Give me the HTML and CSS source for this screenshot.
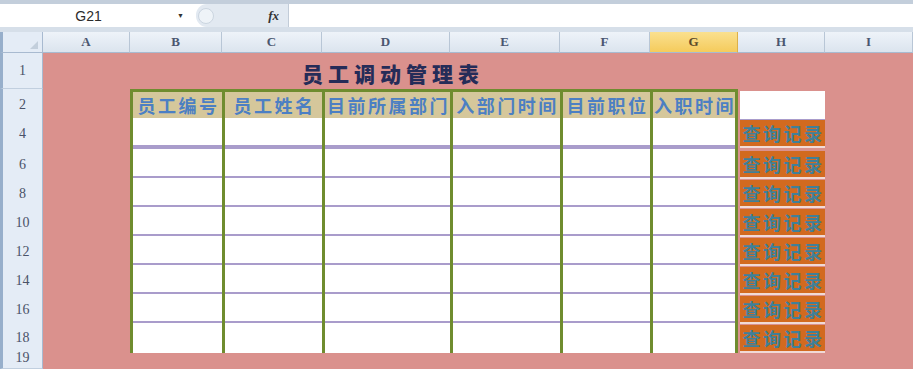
FILE: index.html
```html
<!DOCTYPE html>
<html lang="zh-CN">
<head>
    <meta charset="UTF-8">
    <title>员工调动管理表</title>
    <link rel="stylesheet" href="styles.css">
</head>
<body>
    <div class="top-strip"></div>
    <div class="formula-bar">
        <div class="name-box">
            <span class="cell-ref">G21</span>
            <span class="drop">&#9660;</span>
        </div>
        <div class="fx-pill">
            <span class="knob"></span>
            <span class="fx">fx</span>
        </div>
        <div class="formula-input"></div>
    </div>
    <div class="bar-gap"></div>

    <div class="sheet">
        <div class="row row-cols">
            <div class="corner"></div>
            <div class="col-head">A</div>
            <div class="col-head">B</div>
            <div class="col-head">C</div>
            <div class="col-head">D</div>
            <div class="col-head">E</div>
            <div class="col-head">F</div>
            <div class="col-head active">G</div>
            <div class="col-head">H</div>
            <div class="col-head">I</div>
        </div>

        <div class="row row-title">
            <div class="row-head">1</div>
            <div class="title">员工调动管理表</div>
        </div>

        <div class="row row-caption">
            <div class="row-head">2</div>
            <div></div>
            <div class="th">员工编号</div>
            <div class="th">员工姓名</div>
            <div class="th">目前所属部门</div>
            <div class="th">入部门时间</div>
            <div class="th">目前职位</div>
            <div class="th last">入职时间</div>
            <div class="blank-cell"></div>
        </div>

        <div id="records"></div>

        <div class="row row-end">
            <div class="row-head">19</div>
        </div>
    </div>

    <script>
        // rows 4..18, every second row is a thin separator so only even numbers show
        const rowNumbers = [4, 6, 8, 10, 12, 14, 16, 18];
        const records = document.getElementById('records');

        records.innerHTML = rowNumbers.map((num, i) => {
            let kind = 'row-data';
            if (i === 0) kind = 'row-first';
            if (i === rowNumbers.length - 1) kind = 'row-last';
            return `
            <div class="row ${kind}">
                <div class="row-head">${num}</div>
                <div></div>
                <div class="td"></div>
                <div class="td"></div>
                <div class="td"></div>
                <div class="td"></div>
                <div class="td"></div>
                <div class="td last"></div>
                <div class="query"><span>查询记录</span></div>
            </div>`;
        }).join('');
    </script>
</body>
</html>
```

FILE: styles.css
```css
* {
    box-sizing: border-box;
}
body {
    margin: 0;
    width: 913px;
    height: 369px;
    overflow: hidden;
    background-color: #da918d;
    font-family: "Liberation Sans", "Noto Sans CJK SC", sans-serif;
}
.top-strip {
    height: 4px;
    background-color: #c3cedb;
}
.formula-bar {
    display: flex;
    height: 23px;
    background-color: #fff;
}
.name-box {
    width: 196px;
    display: flex;
    align-items: center;
}
.cell-ref {
    width: 177px;
    text-align: center;
    font-size: 14px;
    color: #2b2b2b;
}
.drop {
    font-size: 7px;
    color: #333;
}
.fx-pill {
    width: 93px;
    display: flex;
    align-items: center;
    justify-content: space-between;
    padding: 0 9px 0 2px;
    background-color: #e2e9f1;
    border-radius: 11px 0 0 11px;
    border-right: 1px solid #c2ccd8;
}
.knob {
    width: 16px;
    height: 16px;
    border-radius: 50%;
    border: 1px solid #cbd5e0;
    background-color: #eef3f8;
}
.fx {
    font-family: "Liberation Serif", serif;
    font-style: italic;
    font-weight: bold;
    font-size: 13px;
    color: #333;
}
.formula-input {
    flex: 1;
}
.bar-gap {
    height: 5px;
    background-color: #d6dfe9;
}

/* sheet grid */
.row {
    display: grid;
    grid-template-columns: 43px 87px 92px 100px 128px 110px 90px 88px 87px 88px;
}
.row-cols {
    height: 21px;
}
.row-title {
    height: 36px;
}
.row-caption {
    height: 29px;
}
.row-first {
    height: 31px;
}
.row-data {
    height: 29px;
}
.row-last {
    height: 24px;
}
.row-end {
    height: 22px;
}

.corner {
    position: relative;
    background-color: #e4ecf6;
    border-left: 3px solid #97afcb;
    border-right: 1px solid #a8bad0;
    border-bottom: 1px solid #a8bad0;
}
.corner::after {
    content: "";
    position: absolute;
    right: 4px;
    bottom: 3px;
    border-left: 8px solid transparent;
    border-bottom: 8px solid #c3cfdc;
}
.col-head {
    display: flex;
    align-items: center;
    justify-content: center;
    background: linear-gradient(#eef3f9, #dbe4ee);
    border-right: 1px solid #b8c6d6;
    border-bottom: 1px solid #a8bad0;
    font-family: "Liberation Serif", serif;
    font-weight: bold;
    font-size: 13px;
    color: #4a5670;
}
.col-head.active {
    background: linear-gradient(#fae08f, #f5cb5c);
    border-right-color: #dcb04a;
    color: #5a4a2a;
}
.row-head {
    display: flex;
    align-items: center;
    justify-content: center;
    background-color: #e4ecf6;
    border-left: 3px solid #97afcb;
    border-right: 1px solid #a8bad0;
    border-bottom: 1px solid #c1cfdf;
    font-family: "Liberation Serif", serif;
    font-size: 14px;
    color: #4a5268;
}

.title {
    grid-column: 4 / 7;
    padding: 5px 0 0 4px;
    text-align: center;
    font-family: "Noto Sans CJK SC", sans-serif;
    font-weight: 900;
    font-size: 21px;
    letter-spacing: 5px;
    color: #252c58;
}

.th {
    display: flex;
    align-items: center;
    justify-content: center;
    padding-left: 2px;
    white-space: nowrap;
    background-color: #d5c79b;
    border-top: 3px solid #6f8c2f;
    border-bottom: 4px solid #6f8c2f;
    border-left: 3px solid #6f8c2f;
    font-family: "Noto Sans CJK SC", sans-serif;
    font-weight: bold;
    font-size: 18px;
    letter-spacing: 2.5px;
    color: #4c7fc3;
}
.th.last,
.td.last {
    border-right: 3px solid #6f8c2f;
}
.blank-cell {
    margin: 2px 0 0 2px;
    background-color: #fff;
    border-bottom: 3px solid #a99ccb;
}
.td {
    border-left: 3px solid #6f8c2f;
    background: linear-gradient(to top, #a99ccb 5px, #fff 5px);
}
.row-last .td {
    background: #fff;
}
.query {
    padding: 2px 0 2px 2px;
}
.row-last .query {
    padding-bottom: 0;
}
.query span {
    display: flex;
    align-items: center;
    justify-content: center;
    height: 100%;
    padding-left: 2px;
    white-space: nowrap;
    background-color: #d26a1f;
    border-bottom: 2px solid #f1dad6;
    font-family: "Noto Sans CJK SC", sans-serif;
    font-weight: bold;
    font-size: 18px;
    letter-spacing: 2.5px;
    color: #3f8099;
}
```
